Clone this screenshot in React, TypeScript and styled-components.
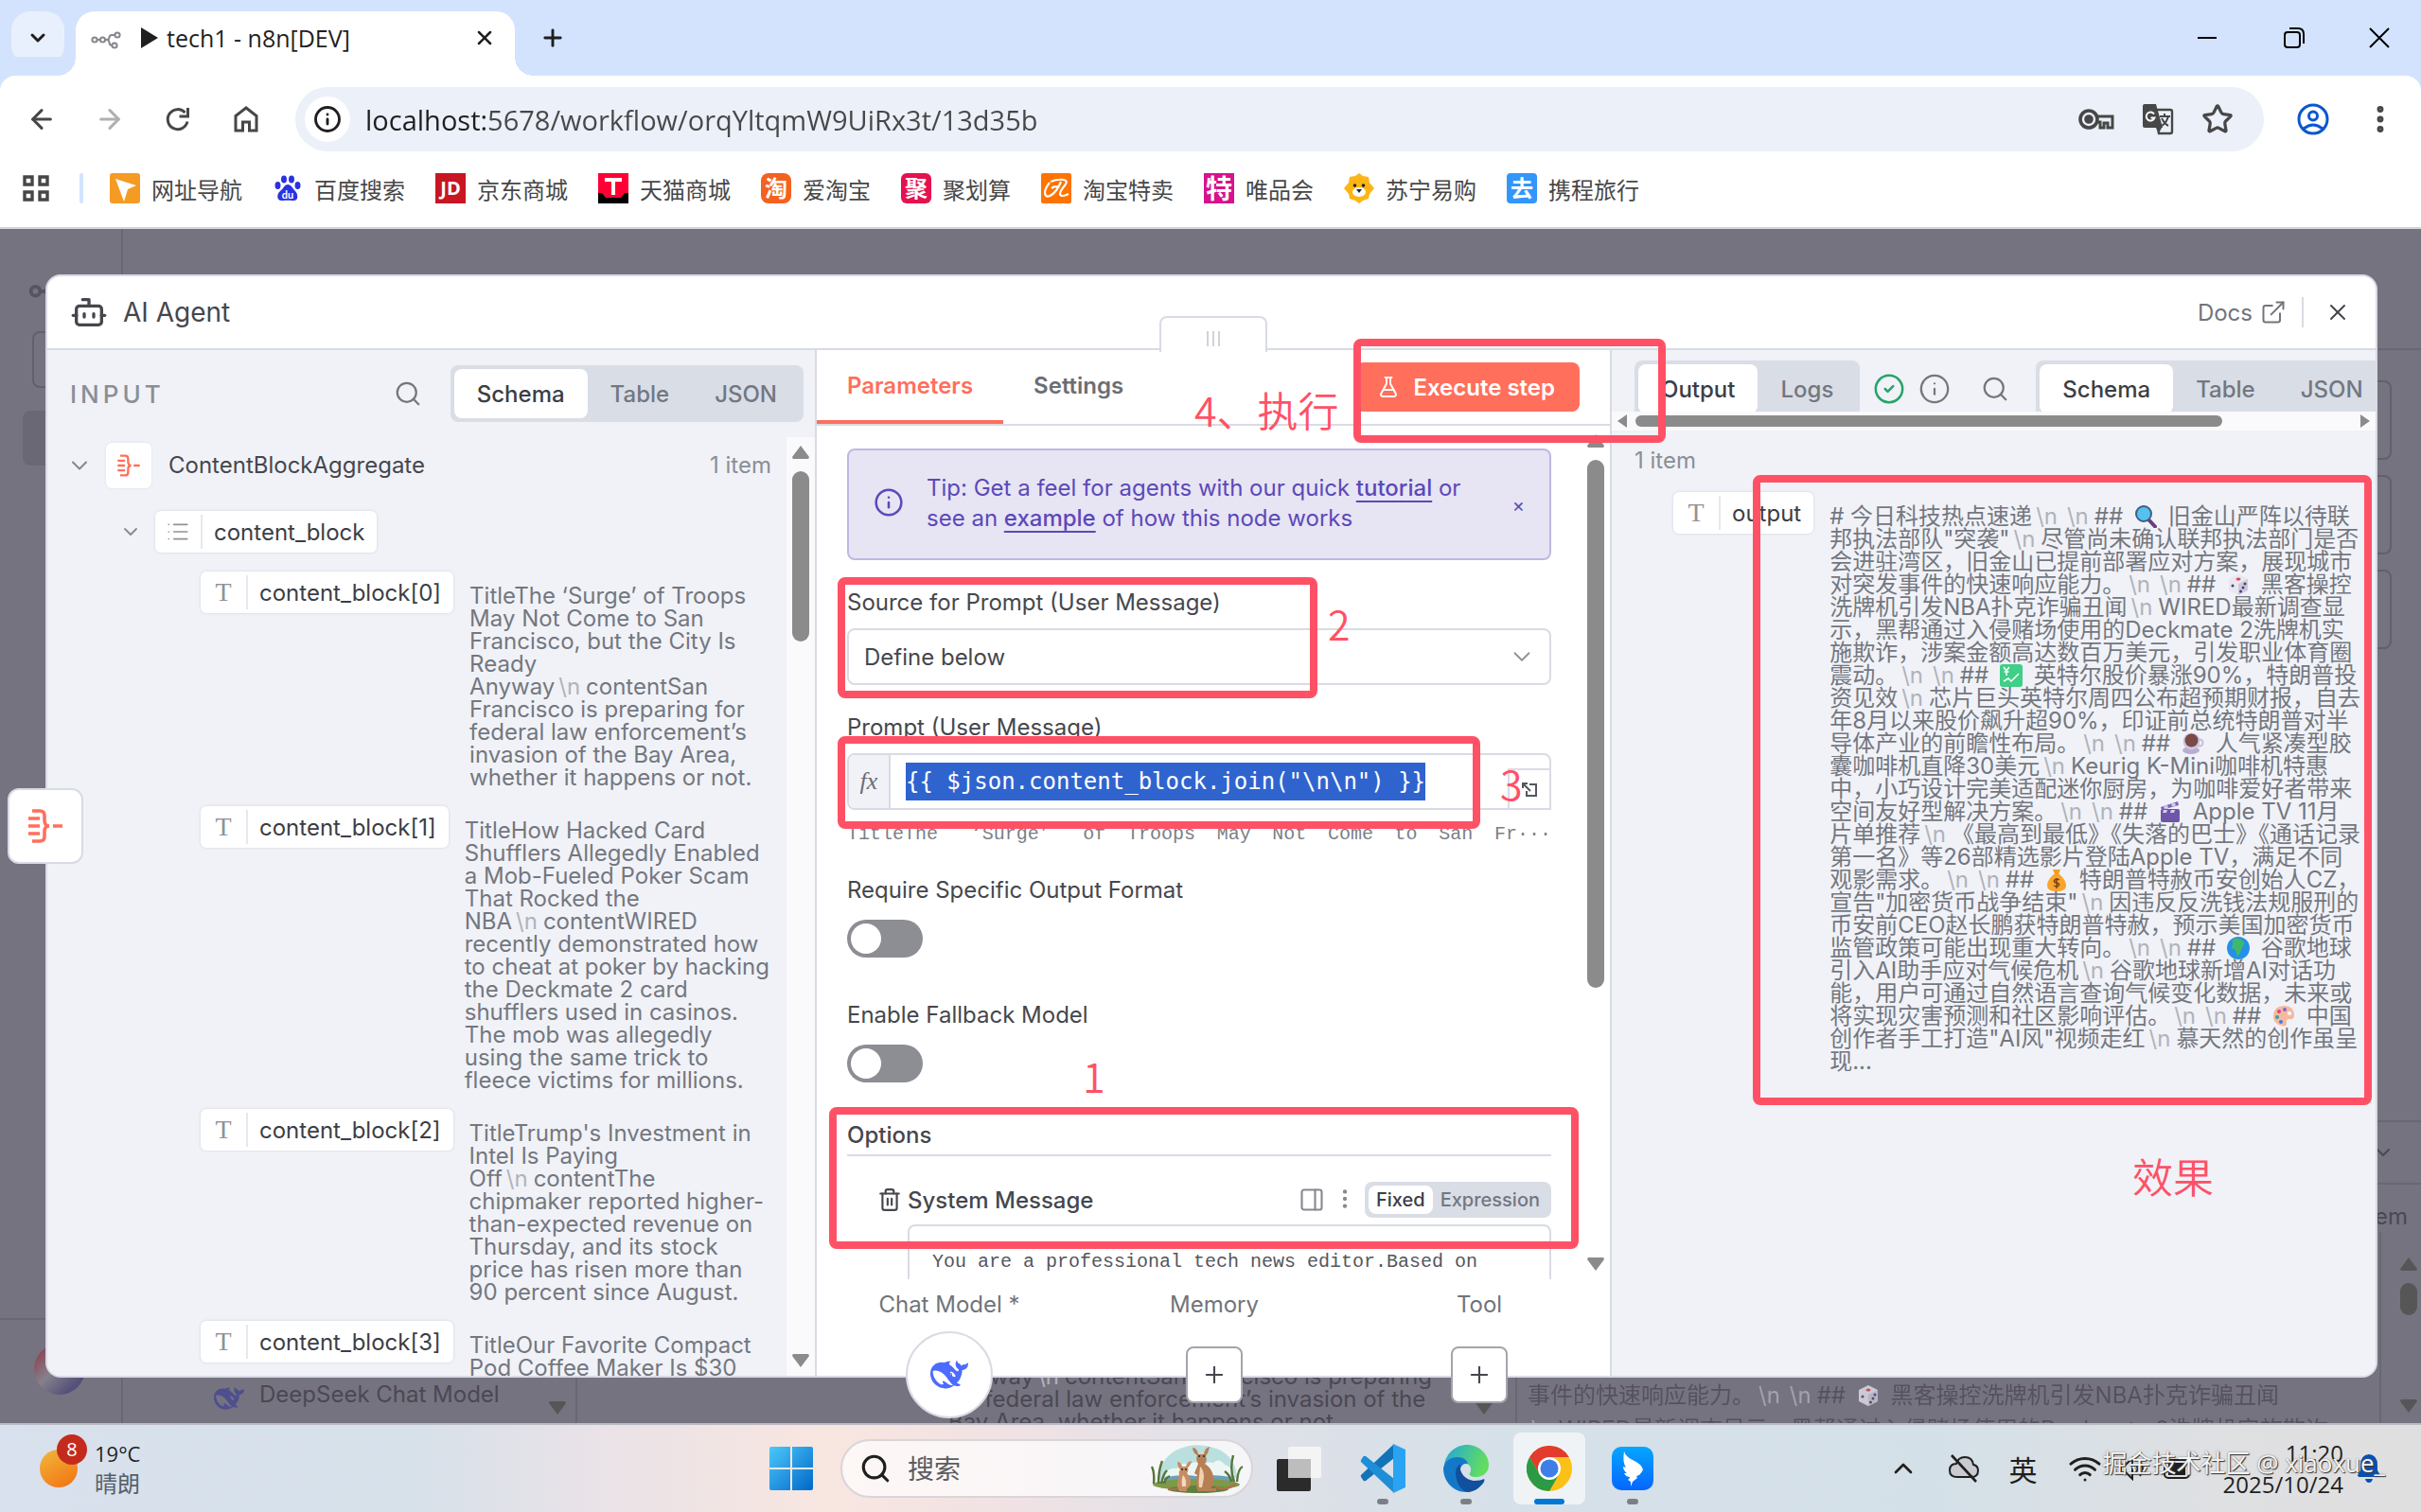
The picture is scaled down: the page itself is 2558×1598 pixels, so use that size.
import React from "react";
import styled, { createGlobalStyle, css } from "styled-components";
import {
  ArrowLeft,
  ArrowRight,
  Bot,
  ChevronDown,
  ChevronUp,
  CircleCheck,
  EllipsisVertical,
  ExternalLink,
  FlaskConical,
  Info,
  List,
  PanelRight,
  Plus,
  Search,
  Star,
  Trash2,
  Wifi,
  X,
} from "lucide-react";

const ui = `"Open Sans", "Noto Sans CJK SC", sans-serif`;
const inter = `Inter, "Noto Sans CJK SC", sans-serif`;
const mono = `"Liberation Mono", "Noto Sans CJK SC", monospace`;
const coral = "#ff6f5c";
const mark = "#ff5166";
const line = "#d9dbe4";

const GlobalStyle = createGlobalStyle`
  * { box-sizing: border-box; }
  html, body { margin: 0; height: 100%; }
  body { font-family: ${inter}; font-size: 24px; color: #45474d; overflow: hidden; }
  button, input, select, textarea { font: inherit; color: inherit; margin: 0; padding: 0; border: 0; background: none; outline: none; }
  svg { display: block; flex: none; }
  a { color: inherit; }
`;

const Screen = styled.div`
  display: flex;
  flex-direction: column;
  height: 100vh;
  overflow: hidden;
`;

/* ---------- browser frame ---------- */

const TabStrip = styled.header`
  display: flex;
  align-items: flex-start;
  flex: none;
  height: 80px;
  padding: 12px 0 0 12px;
  background: #d3e3fd;
  font-family: ${ui};
`;

const TabSearch = styled.button`
  display: grid;
  place-items: center;
  width: 56px;
  height: 56px;
  border-radius: 20px;
  background: #e9f0fd;
  color: #1f1f1f;
`;

const Tab = styled.div`
  position: relative;
  display: flex;
  align-items: center;
  width: 464px;
  height: 68px;
  margin-left: 12px;
  padding: 0 20px 12px 16px;
  border-radius: 20px 20px 0 0;
  background: #fff;
  color: #1f1f1f;
  font-size: 25px;
  &::before,
  &::after {
    content: "";
    position: absolute;
    bottom: 0;
    width: 20px;
    height: 20px;
  }
  &::before {
    left: -20px;
    background: radial-gradient(circle at 0 0, transparent 20px, #fff 20px);
  }
  &::after {
    right: -20px;
    background: radial-gradient(circle at 100% 0, transparent 20px, #fff 20px);
  }
`;

const TabTitle = styled.span`
  display: flex;
  align-items: center;
  flex: 1;
  gap: 8px;
  margin-left: 20px;
`;

const PlainButton = styled.button<{ $w?: number; $c?: string }>`
  display: grid;
  place-items: center;
  width: ${(p) => p.$w ?? 56}px;
  height: 56px;
  color: ${(p) => p.$c ?? "#1f1f1f"};
`;

const WindowButtons = styled.div`
  display: flex;
  margin-left: auto;
`;

const Toolbar = styled.div`
  display: flex;
  align-items: center;
  flex: none;
  height: 92px;
  padding: 0 0 0 8px;
  border-radius: 16px 16px 0 0;
  background: #fff;
  box-shadow: 0 -20px 0 #d3e3fd;
  color: #474747;
  font-family: ${ui};
`;

const AddressBar = styled.div`
  display: flex;
  align-items: center;
  flex: 1;
  height: 68px;
  margin: 0 24px 0 16px;
  padding: 0 32px 0 10px;
  border-radius: 34px;
  background: #ebf0f9;
  gap: 28px;
`;

const SiteInfo = styled.button`
  display: grid;
  place-items: center;
  width: 48px;
  height: 48px;
  border-radius: 24px;
  background: #fff;
  color: #1f1f1f;
  margin-right: -12px;
`;

const UrlInput = styled.input`
  flex: 1;
  height: 40px;
  font-size: 29px;
  background: linear-gradient(90deg, #1f1f1f 130px, #474747 130px);
  background-clip: text;
  -webkit-text-fill-color: transparent;
`;

const Bookmarks = styled.nav`
  display: flex;
  align-items: center;
  flex: none;
  gap: 32px;
  height: 70px;
  padding: 0 24px 14px;
  border-bottom: 2px solid #d5d5d8;
  background: #fff;
  font-family: ${ui};
  font-size: 24px;
  color: #474747;
`;

const BookmarkRule = styled.i`
  width: 4px;
  height: 32px;
  margin-right: -4px;
  border-radius: 2px;
  background: #d3e3fd;
`;

const Bookmark = styled.a`
  display: flex;
  align-items: center;
  gap: 12px;
  text-decoration: none;
  white-space: nowrap;
`;

const GlyphTile = styled.span<{ $bg: string; $r?: number; $size?: number }>`
  display: grid;
  place-items: center;
  width: 32px;
  height: 32px;
  border-radius: ${(p) => p.$r ?? 0}px;
  background: ${(p) => p.$bg};
  color: #fff;
  font-weight: 700;
  font-size: ${(p) => p.$size ?? 24}px;
  line-height: 32px;
`;

/* ---------- page behind the dialog ---------- */

const Page = styled.main`
  position: relative;
  flex: 1;
  min-height: 0;
  background: #767380;
`;

const Backdrop = styled.div`
  position: absolute;
  inset: 0;
  overflow: hidden;
  color: #4a4853;
`;

const BackLine = styled.i<{ $x?: number; $r?: number; $y?: number; $b?: number; $w?: number; $h?: number }>`
  position: absolute;
  ${(p) => (p.$x !== undefined ? `left: ${p.$x}px;` : "")}
  ${(p) => (p.$r !== undefined ? `right: ${p.$r}px;` : "")}
  ${(p) => (p.$y !== undefined ? `top: ${p.$y}px;` : "")}
  ${(p) => (p.$b !== undefined ? `bottom: ${p.$b}px;` : "")}
  width: ${(p) => p.$w ?? 2}px;
  height: ${(p) => p.$h ?? 2}px;
  background: #6a6774;
`;

const BackBox = styled.i<{ $x?: number; $r?: number; $y: number; $h: number; $fill?: boolean }>`
  position: absolute;
  ${(p) => (p.$x !== undefined ? `left: ${p.$x}px;` : "")}
  ${(p) => (p.$r !== undefined ? `right: ${p.$r}px;` : "")}
  top: ${(p) => p.$y}px;
  width: 60px;
  height: ${(p) => p.$h}px;
  border: 2px solid ${(p) => (p.$fill ? "#6b6876" : "#62606c")};
  border-radius: 8px;
  background: ${(p) => (p.$fill ? "#6b6876" : "transparent")};
`;

const BackText = styled.div<{ $x?: number; $r?: number; $b: number; $lh?: number }>`
  position: absolute;
  ${(p) => (p.$x !== undefined ? `left: ${p.$x}px;` : "")}
  ${(p) => (p.$r !== undefined ? `right: ${p.$r}px;` : "")}
  bottom: ${(p) => p.$b}px;
  display: flex;
  align-items: flex-start;
  gap: 16px;
  line-height: ${(p) => p.$lh ?? 24}px;
  white-space: pre;
  opacity: ${(p) => (p.$lh ? 0.75 : 1)};
`;

const BackWhale = styled.span`
  color: #4d4f8e;
  height: 24px;
`;

const BackScroll = styled.div<{ $r: number; $b: number; $short?: boolean }>`
  position: absolute;
  right: ${(p) => p.$r}px;
  bottom: ${(p) => p.$b}px;
  display: flex;
  flex-direction: column;
  height: ${(p) => (p.$short ? 14 : 164)}px;
  filter: brightness(0.62);
  > i:nth-child(2) {
    width: 18px;
    height: 34px;
    margin: 13px 0 auto;
    border-radius: 9px;
    background: #8b8b8b;
  }
`;

const Avatar = styled.i`
  position: absolute;
  left: 36px;
  bottom: 30px;
  width: 54px;
  height: 54px;
  border-radius: 27px;
  background: linear-gradient(135deg, #8a4a5a 15%, #85818c 45%, #55507a 80%);
`;

/* ---------- dialog ---------- */

const Dialog = styled.section`
  position: absolute;
  inset: 48px 46px 48px 48px;
  display: flex;
  flex-direction: column;
  border: 2px solid ${line};
  border-radius: 16px;
  background: #fff;
`;

const DialogHead = styled.div`
  display: flex;
  align-items: center;
  flex: none;
  height: 78px;
  padding: 0 20px 0 24px;
  border-bottom: 2px solid ${line};
  font-size: 28px;
  gap: 16px;
  h1 {
    flex: 1;
    margin: 0;
    font-size: 28px;
    font-weight: 400;
  }
`;

const DocsLink = styled.a`
  display: flex;
  align-items: center;
  gap: 8px;
  color: #71747a;
  font-size: 24px;
  text-decoration: none;
`;

const HeadRule = styled.i`
  width: 2px;
  height: 32px;
  background: ${line};
`;

const CloseButton = styled.button`
  display: grid;
  place-items: center;
  width: 40px;
  height: 40px;
`;

const Columns = styled.div`
  display: grid;
  grid-template-columns: minmax(0, 813fr) 838px minmax(0, 809fr);
  flex: 1;
  min-height: 0;
`;

const SidePanel = styled.section<{ $side: "left" | "right" }>`
  display: flex;
  flex-direction: column;
  min-height: 0;
  overflow: hidden;
  background: #f0f2f8;
  ${(p) =>
    p.$side === "left"
      ? css`
          border-right: 2px solid ${line};
          border-bottom-left-radius: 14px;
        `
      : css`
          border-left: 2px solid ${line};
          border-bottom-right-radius: 14px;
        `}
`;

const InputHead = styled.div`
  display: flex;
  align-items: center;
  flex: none;
  height: 92px;
  padding: 0 12px 0 24px;
  gap: 30px;
  h2 {
    flex: 1;
    margin: 0;
    font-size: 26px;
    font-weight: 500;
    letter-spacing: 4px;
    color: #8b8e96;
  }
`;

const Segments = styled.div<{ $small?: boolean }>`
  display: flex;
  flex: none;
  height: ${(p) => (p.$small ? 38 : 60)}px;
  padding: 4px;
  border-radius: 8px;
  background: #d9dde6;
`;

const Segment = styled.button<{ $on?: boolean; $small?: boolean }>`
  padding: 0 ${(p) => (p.$small ? 8 : 24)}px;
  border-radius: 8px;
  background: ${(p) => (p.$on ? "#fff" : "transparent")};
  color: ${(p) => (p.$on ? "#3c3e44" : "#737780")};
  font-size: ${(p) => (p.$small ? 20 : 24)}px;
  font-weight: 500;
`;

const ScrollPane = styled.div`
  display: flex;
  flex: 1;
  min-height: 0;
`;

const Tree = styled.div`
  flex: 1;
  min-width: 0;
  padding: 5px 16px 0 20px;
  overflow: hidden;
`;

const TreeHead = styled.div`
  display: flex;
  align-items: center;
  height: 49px;
  gap: 14px;
  span {
    flex: 1;
    margin-left: 4px;
  }
  small {
    font-size: 24px;
    color: #8b8e96;
  }
`;

const NodeTile = styled.i`
  display: grid;
  place-items: center;
  width: 48px;
  height: 48px;
  border-radius: 6px;
  background: #fff;
  box-shadow: 0 0 2px #d3d6df;
`;

const TreeBranch = styled.div`
  display: flex;
  align-items: center;
  gap: 14px;
  margin: 24px 0 20px 56px;
`;

const Pill = styled.div`
  display: flex;
  align-items: center;
  flex: none;
  height: 44px;
  padding-right: 13px;
  border-radius: 6px;
  background: #fff;
  box-shadow: 0 0 3px #cfd2dc;
  color: #3c3e44;
`;

const PillIcon = styled.i`
  display: grid;
  place-items: center;
  width: 50px;
  height: 36px;
  margin-right: 12px;
  border-right: 2px solid #e6e8ef;
  color: #909298;
  font: normal 28px/36px "Liberation Serif", serif;
`;

const Entry = styled.div<{ $indent: number }>`
  display: flex;
  align-items: flex-start;
  gap: 17px;
  margin-left: ${(p) => p.$indent}px;
  padding-bottom: 18px;
`;

const Value = styled.p`
  margin: 14px 0 0;
  line-height: 24px;
  color: #74777e;
  white-space: pre;
`;

const Escape = styled.span`
  padding: 0 6px 0 4px;
  color: #b0b3ba;
`;

const EmojiBox = styled.span`
  display: inline-block;
  width: 24px;
  height: 24px;
  margin: 0 5px;
  vertical-align: -4px;
`;

const VTrack = styled.div<{ $w?: number; $bg?: string }>`
  display: flex;
  flex-direction: column;
  align-items: center;
  flex: none;
  width: ${(p) => p.$w ?? 30}px;
  padding: 9px 0;
  background: ${(p) => p.$bg ?? "#fafafc"};
`;

const Thumb = styled.i<{ $top?: number; $h: number }>`
  width: 18px;
  height: ${(p) => p.$h}px;
  margin: ${(p) => p.$top ?? 13}px 0 auto;
  border-radius: 9px;
  background: #8b8b8b;
`;

const Arrow = styled.i<{ $dir: "up" | "down" | "left" | "right" }>`
  width: 18px;
  height: 14px;
  background: #8b8b8b;
  ${(p) =>
    p.$dir === "up" || p.$dir === "down"
      ? css`
          clip-path: ${p.$dir === "up"
            ? "polygon(50% 0, 100% 85%, 95% 100%, 5% 100%, 0 85%)"
            : "polygon(50% 100%, 100% 15%, 95% 0, 5% 0, 0 15%)"};
        `
      : css`
          width: 10px;
          height: 14px;
          clip-path: ${p.$dir === "left" ? "polygon(0 50%, 100% 0, 100% 100%)" : "polygon(100% 50%, 0 0, 0 100%)"};
        `}
`;

/* ---------- middle column ---------- */

const Middle = styled.section`
  position: relative;
  display: flex;
  flex-direction: column;
  min-height: 0;
  background: #fff;
`;

const DragHandle = styled.div`
  position: absolute;
  top: -36px;
  left: 362px;
  display: flex;
  justify-content: center;
  gap: 4px;
  width: 114px;
  height: 38px;
  padding-top: 14px;
  border: 2px solid ${line};
  border-bottom: 0;
  border-radius: 8px 8px 0 0;
  background: #fff;
  i {
    width: 2px;
    height: 16px;
    background: #cfd2da;
  }
`;

const MiddleTabs = styled.div`
  display: flex;
  align-items: stretch;
  flex: none;
  height: 80px;
  padding-right: 32px;
  border-bottom: 2px solid ${line};
`;

const MiddleTab = styled.button<{ $on?: boolean }>`
  padding: 0 32px;
  border-bottom: 4px solid ${(p) => (p.$on ? coral : "transparent")};
  color: ${(p) => (p.$on ? coral : "#6b6e75")};
  font-weight: 600;
`;

const ExecuteButton = styled.button`
  display: flex;
  align-items: center;
  align-self: flex-start;
  gap: 14px;
  height: 52px;
  margin: 13px 0 0 auto;
  padding: 0 26px 0 22px;
  border-radius: 8px;
  background: ${coral};
  color: #fff;
  font-weight: 600;
`;

const Form = styled.div`
  flex: 1;
  min-width: 0;
  padding: 24px 32px 0;
  overflow: hidden;
`;

const Tip = styled.div`
  display: flex;
  align-items: flex-start;
  height: 118px;
  padding: 24px 26px;
  border: 2px solid #bfb8e3;
  border-radius: 8px;
  background: #e7e4f4;
  color: #5b49b8;
  line-height: 32px;
  p {
    flex: 1;
    margin: 0 0 0 24px;
  }
  a {
    font-weight: 500;
    text-underline-offset: 5px;
    text-decoration-thickness: 2px;
  }
  svg {
    margin-top: 15px;
  }
`;

const TipClose = styled.button`
  margin-top: 18px;
  font-size: 20px;
  line-height: 32px;
`;

const Field = styled.div<{ $top?: number; $gap?: number }>`
  display: flex;
  flex-direction: column;
  gap: ${(p) => p.$gap ?? 11}px;
  margin-top: ${(p) => p.$top ?? 29}px;
  label {
    line-height: 32px;
  }
`;

const SelectBox = styled.div`
  display: flex;
  align-items: center;
  height: 60px;
  padding-right: 14px;
  border: 2px solid ${line};
  border-radius: 8px;
  color: #909298;
  select {
    flex: 1;
    height: 56px;
    padding-left: 16px;
    appearance: none;
    color: #45474d;
  }
`;

const ExpressionBox = styled.div`
  display: flex;
  align-items: center;
  height: 60px;
  border: 2px solid ${line};
  border-radius: 8px 8px 0 8px;
`;

const FxTag = styled.span`
  display: grid;
  place-items: center;
  align-self: stretch;
  width: 44px;
  margin-right: 16px;
  border-right: 2px solid ${line};
  border-radius: 6px 0 0 6px;
  background: #f0f2f8;
  font: italic 26px "Liberation Serif", serif;
  color: #6b6e75;
`;

const ExpressionInput = styled.input`
  width: 38ch;
  height: 40px;
  background: #2f64cf;
  color: #fff;
  font-family: "DejaVu Sans Mono", monospace;
  font-size: 24px;
`;

const ExpandButton = styled.button`
  display: grid;
  place-items: center;
  align-self: flex-end;
  width: 44px;
  height: 42px;
  margin-left: auto;
  border-top: 2px solid ${line};
  border-left: 2px solid ${line};
`;

const Preview = styled.output`
  display: flex;
  justify-content: space-between;
  height: 28px;
  margin-top: 1px;
  font-family: ${mono};
  font-size: 20px;
  line-height: 28px;
  color: #7c7f86;
`;

const WideQuote = styled.span<{ $end?: boolean }>`
  display: inline-block;
  width: 24px;
  text-align: ${(p) => (p.$end ? "left" : "right")};
`;

const Toggle = styled.input`
  appearance: none;
  width: 80px;
  height: 40px;
  padding: 4px;
  border-radius: 20px;
  background: #8d8e94;
  &::before {
    content: "";
    display: block;
    width: 32px;
    height: 32px;
    border-radius: 16px;
    background: #fff;
  }
`;

const OptionsTitle = styled.h3`
  margin: 40px 0 0;
  padding-bottom: 4px;
  border-bottom: 2px solid ${line};
  font-size: 24px;
  font-weight: 500;
  line-height: 32px;
`;

const OptionRow = styled.div`
  display: flex;
  align-items: center;
  height: 38px;
  margin: 27px 0 7px 32px;
  font-weight: 500;
  color: #45474d;
  label {
    flex: 1;
    margin-left: 6px;
  }
`;

const OptionIcons = styled.span`
  display: flex;
  gap: 8px;
  margin-right: 8px;
  color: #85888f;
`;

const MessageArea = styled.textarea`
  display: block;
  width: calc(100% - 64px);
  height: 90px;
  margin-left: 64px;
  padding: 24px 24px 0;
  border: 2px solid ${line};
  border-radius: 8px;
  resize: none;
  overflow: hidden;
  font-family: ${mono};
  font-size: 20px;
  line-height: 28px;
  color: #55575e;
`;

const Connectors = styled.div`
  display: grid;
  grid-template-columns: repeat(3, 280px);
  justify-items: center;
  flex: none;
  height: 102px;
  color: #71747a;
`;

const Connector = styled.div`
  display: flex;
  flex-direction: column;
  align-items: center;
  padding-top: 11px;
  line-height: 32px;
`;

const Round = styled.button`
  display: grid;
  place-items: center;
  width: 92px;
  height: 92px;
  margin-top: 12px;
  border: 2px solid ${line};
  border-radius: 46px;
  background: #fff;
  color: #4d6bfe;
`;

const AddButton = styled.button`
  display: grid;
  place-items: center;
  width: 60px;
  height: 60px;
  margin-top: 28px;
  border: 2px solid #a3a5ab;
  border-radius: 8px;
  background: #fff;
  color: #45474d;
`;

/* ---------- right column ---------- */

const OutputHead = styled.div`
  display: flex;
  align-items: flex-start;
  flex: none;
  height: 65px;
  padding: 11px 0 0 24px;
  overflow: hidden;
`;

const HeadIcons = styled.div`
  display: flex;
  align-items: center;
  flex: none;
  gap: 14px;
  height: 60px;
  margin: 0 28px 0 14px;
  color: #74777e;
  svg:last-child {
    margin-left: 18px;
  }
`;

const HTrack = styled.div`
  display: flex;
  align-items: center;
  flex: none;
  height: 20px;
  padding: 0 6px;
  background: #fafafc;
`;

const HThumb = styled.i`
  width: 78%;
  height: 12px;
  margin: 0 auto 0 9px;
  border-radius: 6px;
  background: #8b8b8b;
`;

const ItemCount = styled.p`
  margin: 16px 0 17px 24px;
  line-height: 32px;
  color: #8b8e96;
`;

/* ---------- marks and floating parts over the dialog ---------- */

const FloatingNode = styled.button`
  position: absolute;
  left: 8px;
  top: 591px;
  display: grid;
  place-items: center;
  width: 80px;
  height: 80px;
  border: 2px solid ${line};
  border-radius: 12px;
  background: #fff;
`;

const Frame = styled.i<{ $x: number; $y: number; $w: number; $h: number }>`
  position: absolute;
  left: ${(p) => p.$x}px;
  top: ${(p) => p.$y}px;
  width: ${(p) => p.$w}px;
  height: ${(p) => p.$h}px;
  border: 8px solid ${mark};
  border-radius: 8px;
  pointer-events: none;
`;

const Note = styled.span<{ $x: number; $y: number }>`
  position: absolute;
  left: ${(p) => p.$x}px;
  top: ${(p) => p.$y}px;
  font-family: "Noto Sans CJK SC", sans-serif;
  font-weight: 350;
  font-size: 43px;
  line-height: 48px;
  color: ${mark};
  white-space: nowrap;
`;

/* ---------- taskbar ---------- */

const Taskbar = styled.footer`
  position: relative;
  display: flex;
  align-items: center;
  flex: none;
  height: 94px;
  padding: 0 42px;
  border-top: 2px solid #b9b9c3;
  background: linear-gradient(90deg, #d8e1ed 0%, #d7e1ea 17%, #e8e2e8 24%, #f8e6e0 34%, #f0e2e4 42%, #e0e1e8 50%, #d6e0e8 62%, #d4e0e8 80%, #dfe0e2 92%, #e0dfe0 100%);
  font-family: ${ui};
  color: #1f1f1f;
`;

const Weather = styled.div`
  display: flex;
  align-items: center;
  flex: 1;
  gap: 14px;
  font-size: 22px;
  line-height: 32px;
  span {
    color: #55606b;
    font-size: 24px;
  }
`;

const Sun = styled.i`
  position: relative;
  width: 44px;
  height: 40px;
  &::before {
    content: "";
    display: block;
    width: 40px;
    height: 40px;
    border-radius: 20px;
    background: linear-gradient(150deg, #f0b93c, #f36f10);
  }
`;

const Badge = styled.b`
  position: absolute;
  left: 18px;
  top: -16px;
  width: 32px;
  height: 32px;
  border-radius: 16px;
  background: #c42b1c;
  color: #fff;
  font: normal 20px/32px ${ui};
  text-align: center;
`;

const Dock = styled.div`
  display: flex;
  align-items: center;
  height: 92px;
  margin-left: 24px;
`;

const SearchBox = styled.label`
  display: flex;
  align-items: center;
  flex: none;
  width: 436px;
  height: 62px;
  margin: 0 5px 0 29px;
  padding: 0 8px 0 18px;
  border: 2px solid #d9d5d8;
  border-radius: 31px;
  background: rgba(255, 255, 255, 0.7);
  input {
    width: 0;
    flex: 1;
    margin-left: 17px;
    font-size: 28px;
  }
  input::placeholder {
    color: #5c5c60;
  }
`;

const DockApp = styled.button<{ $on?: boolean; $open?: boolean }>`
  position: relative;
  display: grid;
  place-items: center;
  width: 76px;
  height: 76px;
  margin: 0 6px;
  border-radius: 8px;
  background: ${(p) => (p.$on ? "rgba(255,255,255,0.6)" : "transparent")};
  &::after {
    content: "";
    position: absolute;
    bottom: 0;
    width: ${(p) => (p.$on ? 32 : p.$open ? 12 : 0)}px;
    height: 6px;
    border-radius: 3px;
    background: ${(p) => (p.$on ? "#0078d4" : "#7b8086")};
  }
`;

const Tray = styled.div`
  display: flex;
  align-items: center;
  justify-content: flex-end;
  flex: 1;
  gap: 32px;
  font-size: 30px;
`;

const Clock = styled.time`
  margin: 0 -18px 0 0;
  font-size: 24px;
  line-height: 33px;
  text-align: right;
`;

const TrayGroup = styled.span`
  display: flex;
  align-items: center;
  gap: 18px;
`;

const Watermark = styled.span`
  position: absolute;
  right: 38px;
  bottom: 34px;
  font: 26px/36px ${ui};
  color: #f4f4f4;
  text-shadow: 1px 1px 1px #333, 0 0 2px #777;
  white-space: nowrap;
`;

/* ---------- drawings ---------- */

const AggregateIcon = ({ size }: { size: number }) => (
  <svg width={size} height={size} viewBox="0 0 40 40" fill="none" stroke={coral} strokeWidth="3.6">
    <path d="M6 4h8q5 0 5 5v5q0 6 5 6-5 0-5 6v5q0 5-5 5H6" />
    <path d="M2 12h12M2 20h12M2 28h12M28 20h10" />
  </svg>
);

const Whale = ({ size }: { size: number }) => (
  <svg width={size} height={size} viewBox="0 0 24 24" fill="currentColor">
    <path d="M23.748 4.482c-.254-.124-.364.113-.512.234-.051.039-.094.09-.137.136-.372.397-.806.657-1.373.626-.829-.046-1.537.214-2.163.848-.133-.782-.575-1.248-1.247-1.548-.352-.156-.708-.311-.955-.65-.172-.241-.219-.51-.305-.774-.055-.16-.11-.323-.293-.35-.2-.031-.278.136-.356.276-.313.572-.434 1.202-.422 1.84.027 1.436.633 2.58 1.838 3.393.137.093.172.187.129.323-.082.28-.18.552-.266.833-.055.179-.137.217-.329.14a5.526 5.526 0 01-1.736-1.18c-.857-.828-1.631-1.742-2.597-2.458a11.365 11.365 0 00-.689-.471c-.985-.957.13-1.743.388-1.836.27-.098.093-.432-.779-.428-.872.004-1.67.295-2.687.684a3.055 3.055 0 01-.465.137 9.597 9.597 0 00-2.883-.102c-1.885.21-3.39 1.102-4.497 2.623C.082 8.606-.231 10.684.152 12.85c.403 2.284 1.569 4.175 3.36 5.653 1.858 1.533 3.997 2.284 6.438 2.14 1.482-.085 3.133-.284 4.994-1.86.47.234.962.327 1.78.397.63.059 1.236-.03 1.705-.128.735-.156.684-.837.419-.961-2.155-1.004-1.682-.595-2.113-.926 1.096-1.296 2.746-2.642 3.392-7.003.05-.347.007-.565 0-.845-.004-.17.035-.237.23-.256a4.173 4.173 0 001.545-.475c1.396-.763 1.96-2.015 2.093-3.517.02-.23-.004-.467-.247-.588zM11.581 18c-2.089-1.642-3.102-2.183-3.52-2.16-.392.024-.321.471-.235.763.09.288.207.486.371.739.114.167.192.416-.113.603-.673.416-1.842-.14-1.897-.167-1.361-.802-2.5-1.86-3.301-3.307-.774-1.393-1.224-2.887-1.298-4.482-.02-.386.093-.522.477-.592a4.696 4.696 0 011.529-.039c2.132.312 3.946 1.265 5.468 2.774.868.86 1.525 1.887 2.202 2.891.72 1.066 1.494 2.082 2.48 2.914.348.292.625.514.891.677-.802.09-2.14.11-3.054-.614zm1-6.44a.306.306 0 01.415-.287.302.302 0 01.2.288.306.306 0 01-.31.307.303.303 0 01-.304-.308zm3.11 1.596c-.2.081-.399.151-.59.16a1.245 1.245 0 01-.798-.254c-.274-.23-.47-.358-.552-.758a1.73 1.73 0 01.016-.588c.07-.327-.008-.537-.239-.727-.187-.156-.426-.199-.688-.199a.559.559 0 01-.254-.078c-.11-.054-.2-.19-.114-.358.028-.054.16-.186.192-.21.356-.202.767-.136 1.146.016.352.144.618.408 1.001.782.391.451.462.576.685.914.176.265.336.537.445.848.067.195-.019.354-.25.452z" />
  </svg>
);

const FlowIcon = ({ color = "#85878c", size = 32 }: { color?: string; size?: number }) => (
  <svg width={size} height={size} viewBox="0 0 32 32" fill="none" stroke={color} strokeWidth="2">
    <circle cx="4" cy="18" r="2.600" />
    <circle cx="12.500" cy="18" r="2.600" />
    <circle cx="28" cy="13" r="2.600" />
    <circle cx="25" cy="24" r="2.600" />
    <path d="M6.600 18H10M15 18h2q2 0 2.500-2.500T22 13h3.400M17 18q2 0 2.500 3t3 3" />
  </svg>
);

const emojiArt: Record<string, React.ReactNode> = {
  "🔍": (
    <>
      <path d="M15.500 15.500l6.500 7" stroke="#6b3d7d" strokeWidth="4" strokeLinecap="round" />
      <circle cx="10" cy="9" r="8" fill="#57c1ee" stroke="#3f5d86" strokeWidth="2" />
    </>
  ),
  "🎲": (
    <>
      <path d="M12 1l10 5v12l-10 5-10-5V6z" fill="#e9e6ef" />
      <path d="M12 11l10-5v12l-10 5z" fill="#cfcadb" />
      <ellipse cx="12" cy="6" rx="2.500" ry="1.500" fill="#e0455a" />
      <circle cx="6" cy="13" r="1.500" fill="#4a3f78" />
      <circle cx="19" cy="11" r="1.500" fill="#4a3f78" />
      <circle cx="17" cy="15" r="1.500" fill="#4a3f78" />
      <circle cx="14.500" cy="19" r="1.500" fill="#4a3f78" />
    </>
  ),
  "💹": (
    <>
      <rect x="0" y="0" width="24" height="24" rx="3" fill="#3fcf86" />
      <path d="M4 18l5-3 3 3 8-8M4 3l3 4 3-4M7 7v5M4.500 8h5" stroke="#fff" strokeWidth="1.500" fill="none" />
    </>
  ),
  "☕": (
    <>
      <circle cx="19" cy="11" r="3.500" fill="none" stroke="#c7bcd9" strokeWidth="2" />
      <ellipse cx="10" cy="19" rx="9" ry="4" fill="#b9aed0" />
      <circle cx="10.500" cy="9.500" r="9" fill="#cfc5df" />
      <circle cx="10.500" cy="8.500" r="7" fill="#7a4a48" />
    </>
  ),
  "🎬": (
    <>
      <rect x="2" y="9" width="20" height="14" rx="2" fill="#6d56a8" />
      <path d="M2 7L20 1l1 4L3 10z" fill="#7d66bb" />
      <path d="M5 6l4-1 1 3-4 1zM13 3.500l4-1 1 3-4 1zM5 10h4l-1 3H4zM13 10h4l-1 3h-4z" fill="#d5cbee" />
    </>
  ),
  "💰": (
    <>
      <path d="M8 1h8l-2 5h-4z" fill="#f59a23" />
      <path d="M9 6h6q7 6 7 12 0 6-10 6T2 18Q2 12 9 6z" fill="#f8a52c" />
      <path d="M15 12q-3-2-5 0t2 3 2 3-5 0M12 10v11" stroke="#7a4316" strokeWidth="1.500" fill="none" />
    </>
  ),
  "🌍": (
    <>
      <circle cx="12" cy="12" r="12" fill="#2591e6" />
      <path d="M6 3q6-3 10 1l3 3-3 4-2 6-3 4-2-7-4-2 1-4z" fill="#3fb968" />
    </>
  ),
  "🎨": (
    <>
      <path d="M12 1q11 0 11 10 0 5-5 4-4 0-3 4 0 5-5 3Q0 20 1 11 2 1 12 1z" fill="#f5b9a0" />
      <circle cx="7" cy="7" r="2" fill="#d04a8e" />
      <circle cx="13" cy="5" r="2" fill="#8a63d2" />
      <circle cx="5" cy="13" r="2" fill="#2ea6a0" />
      <circle cx="9" cy="18" r="2" fill="#3a7fe0" />
      <circle cx="18" cy="9" r="2" fill="#fff" />
    </>
  ),
};

const Rich = ({ text }: { text: string }) => (
  <>
    {text.split(/(\\n|🔍|🎲|💹|☕|🎬|💰|🌍|🎨)/u).map((part, i) => {
      if (part === "\\n") return <Escape key={i}>{part}</Escape>;
      if (emojiArt[part])
        return (
          <EmojiBox key={i} role="img">
            <svg width="24" height="24" viewBox="0 0 24 24">
              {emojiArt[part]}
            </svg>
          </EmojiBox>
        );
      return <React.Fragment key={i}>{part}</React.Fragment>;
    })}
  </>
);

const BaiduLogo = () => (
  <svg width="32" height="32" viewBox="0 0 32 32" fill="#2932e1">
    <ellipse cx="5.500" cy="13" rx="3" ry="4" />
    <ellipse cx="12" cy="6.500" rx="3" ry="4" />
    <ellipse cx="20" cy="6.500" rx="3" ry="4" />
    <ellipse cx="26.500" cy="13" rx="3" ry="4" />
    <path d="M16 12c4 0 5 4 8 7s4 11-3 10c-3-.5-7-.5-10 0-7 1-7-7-3-10s4-7 8-7z" />
    <text x="16" y="27" textAnchor="middle" fontSize="11" fontWeight="700" fill="#fff" fontFamily="Lato, sans-serif">
      du
    </text>
  </svg>
);

const NavLogo = () => (
  <svg width="32" height="32" viewBox="0 0 32 32">
    <rect width="32" height="32" rx="3" fill="#f59a23" />
    <path d="M6 6l22 7-9 4-4 13z" fill="#fff" />
  </svg>
);

const TmallLogo = () => (
  <svg width="32" height="32" viewBox="0 0 32 32">
    <rect width="32" height="32" fill="#000" />
    <path d="M0 0h32v21h-4l-4 5H8l-4-5H0z" fill="#ff0036" />
    <path d="M7 5h18v4h-7v14h-4V9H7z" fill="#fff" />
  </svg>
);

const AliLogo = () => (
  <svg width="32" height="32" viewBox="0 0 32 32">
    <rect width="32" height="32" rx="2" fill="#ff7300" />
    <path d="M10 9q8-3 14-2 5 1 1 6-5 6-5 9 1 4 9 0M9 10q-5 6-5 11 1 6 7 2 6-4 10-14M11 16q4-3 7-1" fill="none" stroke="#fff" strokeWidth="2.200" />
  </svg>
);

const LionLogo = () => (
  <svg width="32" height="32" viewBox="0 0 32 32">
    <path d="M16 0l4 3 6 1 1 6 5 6-5 6-1 5-6 2-4 3-4-3-6-2-1-5-5-6 5-6 1-6 6-1z" fill="#fdb515" />
    <circle cx="11.500" cy="13" r="1.800" fill="#222" />
    <circle cx="20.500" cy="13" r="1.800" fill="#222" />
    <ellipse cx="16" cy="20" rx="7" ry="5" fill="#fff" />
    <path d="M13 17h6l-3 4z" fill="#222" />
  </svg>
);

const TranslateIcon = () => (
  <svg width="36" height="36" viewBox="0 0 36 36">
    <path d="M14 8h17q2 0 2 2v21q0 2-2 2H19z" fill="none" stroke="#474747" strokeWidth="2.400" />
    <path d="M4 2h12l7 25H4q-2 0-2-2V4q0-2 2-2z" fill="#474747" />
    <path d="M16 27l3 6 3-6z" fill="#474747" />
    <path d="M14 12.500a4.500 4.500 0 10.500 4h-4" fill="none" stroke="#fff" strokeWidth="2" />
    <path d="M20 15h11M25 12v3M29 15q-2 7-7 10M22 17q3 6 7 8" fill="none" stroke="#474747" strokeWidth="2" />
  </svg>
);

const KeyIcon = () => (
  <svg width="38" height="26" viewBox="0 0 38 26" fill="none" stroke="#474747" strokeWidth="3.600">
    <circle cx="11" cy="13" r="9" />
    <circle cx="11" cy="13" r="3" fill="#474747" />
    <path d="M19 10h17v12h-5v-5h-4v5h-4v-6h-4" strokeWidth="3" />
  </svg>
);

const ProfileIcon = () => (
  <svg width="34" height="34" viewBox="0 0 34 34" fill="none" stroke="#0b57d0" strokeWidth="3">
    <circle cx="17" cy="17" r="15" />
    <circle cx="17" cy="13.500" r="4.500" />
    <path d="M7 27q10-8 20 0" />
  </svg>
);

const ReloadIcon = () => (
  <svg width="28" height="28" viewBox="0 0 28 28" fill="none" stroke="currentColor" strokeWidth="3">
    <path d="M24 16.500A10.500 10.500 0 1121.500 7" />
    <path d="M24.500 2v9h-9" />
  </svg>
);

const HomeIcon = () => (
  <svg width="28" height="30" viewBox="0 0 28 30" fill="none" stroke="currentColor" strokeWidth="3">
    <path d="M3 11.500L14 3l11 8.500V27h-7.500v-9h-7v9H3z" />
  </svg>
);

const GridIcon = () => (
  <svg width="28" height="28" viewBox="1 1 28 28" fill="none" stroke="#474747" strokeWidth="3.400">
    <path d="M3 3h8v8H3zM19 3h8v8h-8zM3 19h8v8H3zM19 19h8v8h-8z" />
  </svg>
);

const WindowsLogo = () => (
  <svg width="46" height="46" viewBox="0 0 46 46">
    <defs>
      <linearGradient id="win" x1="0" y1="0" x2="1" y2="1">
        <stop offset="0" stopColor="#4cc9fb" />
        <stop offset="1" stopColor="#0067c8" />
      </linearGradient>
    </defs>
    <path d="M2 0h20v22H0V2q0-2 2-2zM24 0h20q2 0 2 2v20H24zM0 24h22v22H2q-2 0-2-2zM24 24h22v20q0 2-2 2H24z" fill="url(#win)" />
  </svg>
);

const Kangaroos = () => (
  <svg width="98" height="52" viewBox="0 0 98 52">
    <path d="M9 38Q8 18 26 7q22-11 46-1 18 9 19 30z" fill="#b9e0de" />
    <path d="M14 34q4-10 14-8 4-8 12-4 8-6 14 2 4-6 12-4 6-6 12 2 8 2 10 12z" fill="#eef6f5" />
    <path d="M14 36q16-5 34-2 20-3 40 2v6H14z" fill="#6f9fb8" />
    <ellipse cx="48" cy="43" rx="46" ry="6" fill="#7d9a48" />
    <ellipse cx="50" cy="48" rx="32" ry="4" fill="#5f8040" />
    <path d="M3 42Q4 30 1 24M8 42q0-14 4-24M11 42q2-10 6-14M14 42q1-6 6-8M88 40q-5-13-1-28M91 40q1-14 6-16M85 40q-2-8-7-11" stroke="#56743c" strokeWidth="2.400" fill="none" />
    <path d="M44 4q5 0 6 7h6q1-7 6-8-1 6-4 10 2 5-1 8 8 5 9 14 1 8-3 12h6v3H50q-2-3-2-8 0-6 1-9l-3-2 4-10q-3-4-1-9-5-3-5-8z" fill="#b87f55" />
    <path d="M52 24q4 3 4 12l-2 10h-3q-1-6 0-12z" fill="#efd3b0" />
    <path d="M68 45q10 6 22-3" stroke="#b07048" strokeWidth="2.400" fill="none" />
    <path d="M28 19q4 0 5 5h4q1-5 6-6-1 5-4 7 1 4-1 6 4 4 4 9 0 6-4 7v3H30q-3-4-2-9l2-9q-1-2 1-5-3-3-3-8z" fill="#c68d62" />
    <path d="M34 33q4 4 3 12h-4q-1-7 1-12z" fill="#f2dbbd" />
    <path d="M29 47q-6 2-11 1" stroke="#b07048" strokeWidth="2" fill="none" />
    <circle cx="51" cy="13" r="1" fill="#222" />
    <circle cx="56" cy="13" r="1" fill="#222" />
    <circle cx="33" cy="27" r="1" fill="#222" />
    <circle cx="37" cy="27" r="1" fill="#222" />
  </svg>
);

const TaskView = () => (
  <svg width="48" height="48" viewBox="0 0 48 48">
    <rect x="0" y="14" width="36" height="34" rx="2" fill="#2b2b2b" />
    <rect x="12" y="1" width="35" height="33" rx="2" fill="#f4f4f4" />
    <path d="M12 14h24v20H12z" fill="#bdbdbd" />
  </svg>
);

const CodeLogo = () => (
  <svg width="48" height="52" viewBox="0 0 48 52">
    <path d="M36 0v15L6 39q-2 1-3-1l-2-3q-1-2 1-3z" fill="#1273b8" />
    <path d="M36 52V37L6 13q-2-1-3 1l-2 3q-1 2 1 3z" fill="#1e8ed6" />
    <path d="M35 0l13 6v40l-13 6z" fill="#2aa4f2" />
  </svg>
);

const EdgeLogo = () => (
  <svg width="48" height="52" viewBox="0 -2 48 52">
    <defs>
      <linearGradient id="edgeTop" x1="0" y1="0" x2="1" y2="0.300">
        <stop offset="0" stopColor="#22a5dc" />
        <stop offset="1" stopColor="#62dd60" />
      </linearGradient>
    </defs>
    <path d="M1 20C3 8 13-1 25-1c13 0 23 10 23 21 0 8-6 13-13 13-6 0-8-2-7-4 3-5 0-10-5-10-3-6-14-7-22 1z" fill="url(#edgeTop)" />
    <path d="M0 24c1-8 8-12 15-12 6 0 10 3 11 7-4-1-8 2-8 7 0 8 8 14 16 14 4 0 7-1 9-2-4 6-11 11-19 11C11 49 0 38 0 24z" fill="#1478c8" />
    <path d="M13 28c0-4 2-7 5-9-2 10 6 17 14 18 5 0 9-1 11-2q1 1 0 3c-4 6-9 10-17 11-9-2-13-12-13-21z" fill="#11509c" />
  </svg>
);

const ChromeLogo = () => (
  <svg width="48" height="48" viewBox="0 0 48 48">
    <circle cx="24" cy="24" r="24" fill="#fbc116" />
    <path d="M24 12h20.800A24 24 0 003.200 12l10.400 18z" fill="#e33b2e" />
    <path d="M3.200 12A24 24 0 0024 48l10.400-18H13.600z" fill="#2a9a45" />
    <circle cx="24" cy="24" r="12" fill="#fff" />
    <circle cx="24" cy="24" r="9.500" fill="#3f7ee8" />
  </svg>
);

const WingLogo = () => (
  <svg width="44" height="46" viewBox="0 -1 44 46">
    <defs>
      <linearGradient id="wing" x1="0" y1="0" x2="0" y2="1">
        <stop offset="0" stopColor="#06a6ff" />
        <stop offset="1" stopColor="#0566ff" />
      </linearGradient>
    </defs>
    <rect y="-1" width="44" height="46" rx="10" fill="url(#wing)" />
    <path d="M13 4q2 6 9 9 9 4 11 10-1 3-4 6l-3 1 1 2-5 4-2 5 0-5-3-2q2-1 2-3-4 0-6-4h3q-4-3-4-7l3 1q-4-6-2-17z" fill="#fff" />
  </svg>
);

const CloudOff = () => (
  <svg width="32" height="30" viewBox="0 0 32 30" fill="none" stroke="#1f1f1f" strokeWidth="2">
    <path d="M9 24q-8 0-8-7t7-7q2-7 9-7 8 0 9 8 5 1 5 6 0 7-7 7z" fill="#c9cbd0" />
    <path d="M3 1l26 28" strokeWidth="2.600" />
  </svg>
);

const Speaker = () => (
  <svg width="28" height="26" viewBox="0 0 28 26" fill="none" stroke="#1f1f1f" strokeWidth="2">
    <path d="M2 9h5l7-7v22l-7-7H2z" />
    <path d="M18 9q3 4 0 8M22 5q6 8 0 16" />
  </svg>
);

const Battery = () => (
  <svg width="32" height="26" viewBox="0 0 32 26" fill="none" stroke="#1f1f1f" strokeWidth="2">
    <rect x="2" y="4" width="26" height="19" rx="4" />
    <rect x="7" y="8" width="16" height="11" fill="#1f1f1f" />
  </svg>
);

const Bell = () => (
  <svg width="26" height="32" viewBox="0 0 26 32" fill="#0a4fae">
    <path d="M13 1q9 1 9 11v6l3 5q0 2-2 2H3q-2 0-2-2l3-5v-6Q4 2 13 1z" />
    <path d="M9 27h8q-1 4-4 4t-4-4z" />
  </svg>
);

/* ---------- data ---------- */

const bookmarks: { name: string; logo: React.ReactNode }[] = [
  { name: "网址导航", logo: <NavLogo /> },
  { name: "百度搜索", logo: <BaiduLogo /> },
  { name: "京东商城", logo: <GlyphTile $bg="#c81623" $size={20}>JD</GlyphTile> },
  { name: "天猫商城", logo: <TmallLogo /> },
  { name: "爱淘宝", logo: <GlyphTile $bg="#f4621f" $r={8}>淘</GlyphTile> },
  { name: "聚划算", logo: <GlyphTile $bg="#e5124f" $r={6}>聚</GlyphTile> },
  { name: "淘宝特卖", logo: <AliLogo /> },
  { name: "唯品会", logo: <GlyphTile $bg="#d6128c" $size={28}>特</GlyphTile> },
  { name: "苏宁易购", logo: <LionLogo /> },
  { name: "携程旅行", logo: <GlyphTile $bg="#3296fa" $r={4}>去</GlyphTile> },
];

const blocks = [
  `TitleThe ‘Surge’ of Troops
May Not Come to San
Francisco, but the City Is
Ready
Anyway\\ncontentSan
Francisco is preparing for
federal law enforcement’s
invasion of the Bay Area,
whether it happens or not.`,
  `TitleHow Hacked Card
Shufflers Allegedly Enabled
a Mob-Fueled Poker Scam
That Rocked the
NBA\\ncontentWIRED
recently demonstrated how
to cheat at poker by hacking
the Deckmate 2 card
shufflers used in casinos.
The mob was allegedly
using the same trick to
fleece victims for millions.`,
  `TitleTrump's Investment in
Intel Is Paying
Off\\ncontentThe
chipmaker reported higher-
than-expected revenue on
Thursday, and its stock
price has risen more than
90 percent since August.`,
  `TitleOur Favorite Compact
Pod Coffee Maker Is $30`,
];

const output = `# 今日科技热点速递\\n\\n## 🔍 旧金山严阵以待联
邦执法部队"突袭"\\n尽管尚未确认联邦执法部门是否
会进驻湾区，旧金山已提前部署应对方案，展现城市
对突发事件的快速响应能力。\\n\\n## 🎲 黑客操控
洗牌机引发NBA扑克诈骗丑闻\\nWIRED最新调查显
示，黑帮通过入侵赌场使用的Deckmate 2洗牌机实
施欺诈，涉案金额高达数百万美元，引发职业体育圈
震动。\\n\\n## 💹 英特尔股价暴涨90%，特朗普投
资见效\\n芯片巨头英特尔周四公布超预期财报，自去
年8月以来股价飙升超90%，印证前总统特朗普对半
导体产业的前瞻性布局。\\n\\n## ☕ 人气紧凑型胶
囊咖啡机直降30美元\\nKeurig K-Mini咖啡机特惠
中，小巧设计完美适配迷你厨房，为咖啡爱好者带来
空间友好型解决方案。\\n\\n## 🎬 Apple TV 11月
片单推荐\\n《最高到最低》《失落的巴士》《通话记录
第一名》等26部精选影片登陆Apple TV，满足不同
观影需求。\\n\\n## 💰 特朗普特赦币安创始人CZ，
宣告"加密货币战争结束"\\n因违反反洗钱法规服刑的
币安前CEO赵长鹏获特朗普特赦，预示美国加密货币
监管政策可能出现重大转向。\\n\\n## 🌍 谷歌地球
引入AI助手应对气候危机\\n谷歌地球新增AI对话功
能，用户可通过自然语言查询气候变化数据，未来或
将实现灾害预测和社区影响评估。\\n\\n## 🎨 中国
创作者手工打造"AI风"视频走红\\n慕天然的创作虽呈
现...`;

const previewWords = ["TitleThe", "‘Surge’", "of", "Troops", "May", "Not", "Come", "to", "San", "Fr···"];

/* ---------- sections ---------- */

const Browser = () => (
  <>
    <TabStrip>
      <TabSearch aria-label="Search tabs">
        <ChevronDown size={24} strokeWidth={3} />
      </TabSearch>
      <Tab>
        <FlowIcon />
        <TabTitle>
          <svg width="20" height="22" viewBox="0 0 20 22">
            <path d="M1 0l18 11L1 22z" fill="#1f1f1f" />
          </svg>
          tech1 - n8n[DEV]
        </TabTitle>
        <X size={24} strokeWidth={2.5} />
      </Tab>
      <PlainButton aria-label="New tab" $w={80}>
        <Plus size={28} strokeWidth={2.5} />
      </PlainButton>
      <WindowButtons>
        <PlainButton aria-label="Minimize" $w={92} $c="#000">
          <svg width="20" height="2">
            <rect width="20" height="2" />
          </svg>
        </PlainButton>
        <PlainButton aria-label="Restore" $w={92} $c="#000">
          <svg width="22" height="22" viewBox="0 0 22 22" fill="none" stroke="#000" strokeWidth="2">
            <rect x="1" y="5" width="16" height="16" rx="3" />
            <path d="M6 1h9q6 0 6 6v10" />
          </svg>
        </PlainButton>
        <PlainButton aria-label="Close" $w={88} $c="#000">
          <svg width="22" height="22" viewBox="0 0 22 22" fill="none" stroke="#000" strokeWidth="2">
            <path d="M1 1l20 20M21 1L1 21" />
          </svg>
        </PlainButton>
      </WindowButtons>
    </TabStrip>
    <Toolbar>
      <PlainButton aria-label="Back" $w={72} $c="#474747">
        <ArrowLeft size={32} strokeWidth={2.3} />
      </PlainButton>
      <PlainButton aria-label="Forward" $w={72} $c="#b0b0b0">
        <ArrowRight size={32} strokeWidth={2.3} />
      </PlainButton>
      <PlainButton aria-label="Reload" $w={72} $c="#474747">
        <ReloadIcon />
      </PlainButton>
      <PlainButton aria-label="Home" $w={72} $c="#474747">
        <HomeIcon />
      </PlainButton>
      <AddressBar>
        <SiteInfo aria-label="Site information">
          <Info size={30} strokeWidth={2.3} />
        </SiteInfo>
        <UrlInput aria-label="Address" defaultValue="localhost:5678/workflow/orqYltqmW9UiRx3t/13d35b" />
        <KeyIcon />
        <TranslateIcon />
        <Star size={34} strokeWidth={2.3} />
      </AddressBar>
      <PlainButton aria-label="Profile">
        <ProfileIcon />
      </PlainButton>
      <PlainButton aria-label="Menu" $c="#474747" $w={86}>
        <EllipsisVertical size={36} strokeWidth={2.6} />
      </PlainButton>
    </Toolbar>
    <Bookmarks>
      <GridIcon />
      <BookmarkRule />
      {bookmarks.map((b) => (
        <Bookmark key={b.name} href="#">
          {b.logo}
          {b.name}
        </Bookmark>
      ))}
    </Bookmarks>
  </>
);

const Behind = () => (
  <Backdrop aria-hidden>
    <BackLine $x={128} $y={0} $h={1262} />
    <BackLine $x={0} $y={1151} $w={128} />
    <BackText $x={30} $b={1170}>
      <FlowIcon color="#56545f" size={60} />
    </BackText>
    <BackBox $x={34} $y={108} $h={60} />
    <BackBox $x={24} $y={192} $h={58} $fill />
    <BackLine $r={0} $y={126} $w={46} />
    <BackBox $r={31} $y={160} $h={84} />
    <BackBox $r={31} $y={260} $h={84} />
    <BackBox $r={31} $y={360} $h={84} />
    <BackLine $r={0} $y={942} $w={46} />
    <BackLine $r={0} $y={1008} $w={46} />
    <BackLine $r={42} $y={1060} $h={202} />
    <BackText $r={14} $b={206}>
      item
    </BackText>
    <BackText $r={28} $b={274}>
      <ChevronDown size={24} />
    </BackText>
    <Avatar />
    <BackText $x={226} $b={18}>
      <BackWhale>
        <Whale size={32} />
      </BackWhale>
      DeepSeek Chat Model
    </BackText>
    <BackLine $x={608} $b={0} $h={48} />
    <BackText $x={1002} $b={-11}>
      <div>
        <Rich text={"Anyway\\ncontentSan Francisco is preparing\nfor federal law enforcement’s invasion of the\nBay Area, whether it happens or not."} />
      </div>
    </BackText>
    <BackLine $x={1601} $b={0} $h={48} />
    <BackText $x={1614} $b={-25} $lh={36}>
      <div>
        <Rich text={"事件的快速响应能力。\\n\\n## 🎲 黑客操控洗牌机引发NBA扑克诈骗丑闻\n\\nWIRED最新调查显示，黑帮通过入侵赌场使用的Deckmate 2洗牌机实施欺诈"} />
      </div>
    </BackText>
    <BackScroll $r={4} $b={11}>
      <Arrow $dir="up" />
      <i />
      <Arrow $dir="down" />
    </BackScroll>
    <BackScroll $r={1960} $b={9} $short>
      <Arrow $dir="down" />
    </BackScroll>
    <BackScroll $r={981} $b={9} $short>
      <Arrow $dir="down" />
    </BackScroll>
  </Backdrop>
);

const InputPanel = () => (
  <SidePanel $side="left">
    <InputHead>
      <h2>INPUT</h2>
      <Search size={30} strokeWidth={1.8} color="#74777e" />
      <Segments>
        <Segment $on>Schema</Segment>
        <Segment>Table</Segment>
        <Segment>JSON</Segment>
      </Segments>
    </InputHead>
    <ScrollPane>
      <Tree>
        <TreeHead>
          <ChevronDown size={28} strokeWidth={1.8} color="#85888f" />
          <NodeTile>
            <AggregateIcon size={26} />
          </NodeTile>
          <span>ContentBlockAggregate</span>
          <small>1 item</small>
        </TreeHead>
        <TreeBranch>
          <ChevronDown size={24} strokeWidth={1.8} color="#85888f" />
          <Pill>
            <PillIcon>
              <List size={26} strokeWidth={1.5} />
            </PillIcon>
            content_block
          </Pill>
        </TreeBranch>
        {blocks.map((text, i) => (
          <Entry key={i} $indent={142}>
            <Pill>
              <PillIcon>T</PillIcon>
              {`content_block[${i}]`}
            </Pill>
            <Value>
              <Rich text={text} />
            </Value>
          </Entry>
        ))}
      </Tree>
      <VTrack>
        <Arrow $dir="up" />
        <Thumb $h={180} />
        <Arrow $dir="down" />
      </VTrack>
    </ScrollPane>
  </SidePanel>
);

const ParametersPanel = () => (
  <Middle>
    <DragHandle>
      <i />
      <i />
      <i />
    </DragHandle>
    <MiddleTabs>
      <MiddleTab $on>Parameters</MiddleTab>
      <MiddleTab>Settings</MiddleTab>
      <ExecuteButton>
        <FlaskConical size={24} />
        Execute step
      </ExecuteButton>
    </MiddleTabs>
    <ScrollPane>
      <Form>
        <Tip>
          <Info size={32} strokeWidth={1.9} />
          <p>
            Tip: Get a feel for agents with our quick <a href="#">tutorial</a> or
            <br />
            see an <a href="#">example</a> of how this node works
          </p>
          <TipClose aria-label="Dismiss">×</TipClose>
        </Tip>
        <Field>
          <label htmlFor="source">Source for Prompt (User Message)</label>
          <SelectBox>
            <select id="source">
              <option>Define below</option>
            </select>
            <ChevronDown size={30} strokeWidth={1.5} />
          </SelectBox>
        </Field>
        <Field>
          <label htmlFor="prompt">Prompt (User Message)</label>
          <ExpressionBox>
            <FxTag>fx</FxTag>
            <ExpressionInput id="prompt" defaultValue={'{{ $json.content_block.join("\\n\\n") }}'} />
            <ExpandButton aria-label="Expand">
              <svg width="18" height="16" viewBox="0 0 18 16" fill="none" stroke="#55575e" strokeWidth="2">
                <path d="M9 3h7v12H6V10M2 7V2h5M2 2l8 8" />
              </svg>
            </ExpandButton>
          </ExpressionBox>
          <Preview>
            {previewWords.map((w) =>
              w === "‘Surge’" ? (
                <span key={w}>
                  <WideQuote>‘</WideQuote>Surge<WideQuote $end>’</WideQuote>
                </span>
              ) : (
                <span key={w}>{w}</span>
              ),
            )}
          </Preview>
        </Field>
        <Field $gap={15}>
          <label htmlFor="format">Require Specific Output Format</label>
          <Toggle id="format" type="checkbox" />
        </Field>
        <Field $top={45} $gap={15}>
          <label htmlFor="fallback">Enable Fallback Model</label>
          <Toggle id="fallback" type="checkbox" />
        </Field>
        <OptionsTitle>Options</OptionsTitle>
        <OptionRow>
          <Trash2 size={26} />
          <label htmlFor="system">System Message</label>
          <OptionIcons>
            <PanelRight size={28} strokeWidth={1.8} />
            <EllipsisVertical size={26} />
          </OptionIcons>
          <Segments $small>
            <Segment $on $small>
              Fixed
            </Segment>
            <Segment $small>Expression</Segment>
          </Segments>
        </OptionRow>
        <MessageArea id="system" defaultValue="You are a professional tech news editor.Based on" />
      </Form>
      <VTrack $w={30} $bg="#fff">
        <Arrow $dir="up" />
        <Thumb $h={558} />
        <Arrow $dir="down" />
      </VTrack>
    </ScrollPane>
    <Connectors>
      <Connector>
        Chat Model *
        <Round aria-label="DeepSeek Chat Model">
          <Whale size={40} />
        </Round>
      </Connector>
      <Connector>
        Memory
        <AddButton aria-label="Add memory">
          <Plus size={28} strokeWidth={1.8} />
        </AddButton>
      </Connector>
      <Connector>
        Tool
        <AddButton aria-label="Add tool">
          <Plus size={28} strokeWidth={1.8} />
        </AddButton>
      </Connector>
    </Connectors>
  </Middle>
);

const OutputPanel = () => (
  <SidePanel $side="right">
    <OutputHead>
      <Segments>
        <Segment $on>Output</Segment>
        <Segment>Logs</Segment>
      </Segments>
      <HeadIcons>
        <CircleCheck size={34} strokeWidth={1.8} color="#28a36a" />
        <Info size={34} strokeWidth={1.6} />
        <Search size={30} strokeWidth={1.8} />
      </HeadIcons>
      <Segments>
        <Segment $on>Schema</Segment>
        <Segment>Table</Segment>
        <Segment>JSON</Segment>
      </Segments>
    </OutputHead>
    <HTrack>
      <Arrow $dir="left" />
      <HThumb />
      <Arrow $dir="right" />
    </HTrack>
    <ItemCount>1 item</ItemCount>
    <Entry $indent={65}>
      <Pill>
        <PillIcon>T</PillIcon>
        output
      </Pill>
      <Value>
        <Rich text={output} />
      </Value>
    </Entry>
  </SidePanel>
);

const DesktopBar = () => (
  <Taskbar>
    <Weather>
      <Sun>
        <Badge>8</Badge>
      </Sun>
      <div>
        19°C
        <br />
        <span>晴朗</span>
      </div>
    </Weather>
    <Dock>
      <WindowsLogo />
      <SearchBox>
        <Search size={34} strokeWidth={2.2} />
        <input aria-label="搜索" placeholder="搜索" />
        <Kangaroos />
      </SearchBox>
      <DockApp aria-label="Task view">
        <TaskView />
      </DockApp>
      <DockApp aria-label="Code" $open>
        <CodeLogo />
      </DockApp>
      <DockApp aria-label="Edge" $open>
        <EdgeLogo />
      </DockApp>
      <DockApp aria-label="Chrome" $on>
        <ChromeLogo />
      </DockApp>
      <DockApp aria-label="DingTalk" $open>
        <WingLogo />
      </DockApp>
    </Dock>
    <Tray>
      <ChevronUp size={32} />
      <CloudOff />
      英
      <TrayGroup>
        <Wifi size={36} />
        <Speaker />
        <Battery />
      </TrayGroup>
      <Clock>
        11:20
        <br />
        2025/10/24
      </Clock>
      <Bell />
    </Tray>
    <Watermark>掘金技术社区 @ xiaoxue_</Watermark>
  </Taskbar>
);

export default function App() {
  return (
    <Screen>
      <GlobalStyle />
      <Browser />
      <Page>
        <Behind />
        <Dialog>
          <DialogHead>
            <Bot size={40} strokeWidth={2} />
            <h1>AI Agent</h1>
            <DocsLink href="#">
              Docs
              <ExternalLink size={28} strokeWidth={1.7} />
            </DocsLink>
            <HeadRule />
            <CloseButton aria-label="Close">
              <X size={28} strokeWidth={1.7} />
            </CloseButton>
          </DialogHead>
          <Columns>
            <InputPanel />
            <ParametersPanel />
            <OutputPanel />
          </Columns>
        </Dialog>
        <FloatingNode aria-label="ContentBlockAggregate">
          <AggregateIcon size={40} />
        </FloatingNode>
        <Frame $x={1430} $y={116} $w={330} $h={110} />
        <Frame $x={885} $y={368} $w={507} $h={128} />
        <Frame $x={885} $y={536} $w={679} $h={98} />
        <Frame $x={876} $y={928} $w={792} $h={150} />
        <Frame $x={1852} $y={260} $w={654} $h={666} />
        <Note $x={1262} $y={166}>4、执行</Note>
        <Note $x={1403} $y={392}>2</Note>
        <Note $x={1585} $y={561}>3</Note>
        <Note $x={1144} $y={870}>1</Note>
        <Note $x={2253} $y={976}>效果</Note>
      </Page>
      <DesktopBar />
    </Screen>
  );
}
